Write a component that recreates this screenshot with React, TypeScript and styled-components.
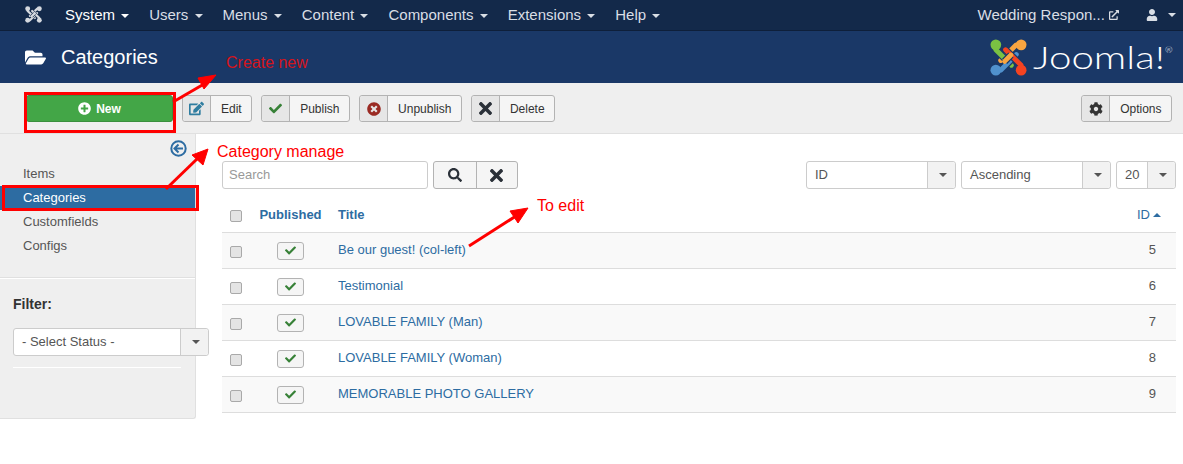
import React from "react";
import styled, { createGlobalStyle } from "styled-components";
import {
  FaCheck,
  FaCog,
  FaExternalLinkAlt,
  FaFolderOpen,
  FaPlusCircle,
  FaSearch,
  FaTimes,
  FaTimesCircle,
  FaUser,
  FaEdit,
} from "react-icons/fa";

const GlobalStyle = createGlobalStyle`
  html, body {
    margin: 0;
    padding: 0;
    background: #fff;
    font-family: "Liberation Sans", Arial, sans-serif;
    font-size: 13px;
    color: #333;
  }
`;

const menus = ["Users", "Menus", "Content", "Components", "Extensions", "Help"];

const rows = [
  { title: "Be our guest! (col-left)", id: 5 },
  { title: "Testimonial", id: 6 },
  { title: "LOVABLE FAMILY (Man)", id: 7 },
  { title: "LOVABLE FAMILY (Woman)", id: 8 },
  { title: "MEMORABLE PHOTO GALLERY", id: 9 },
];

// four interlocking arms of the Joomla mark, drawn so each one passes over the next
const arms = {
  orange: "M32 6 L27 6 L11 22",
  green: "M6 6 L6 11 L22 27",
  blue: "M6 32 L11 32 L27 16",
  red: "M32 32 L32 27 L16 11",
};

const JoomlaMark: React.FC<{ size: number; casing: string; mono?: string }> = ({ size, casing, mono }) => {
  const arm = (d: string, colour: string) => (
    <>
      <path d={d} stroke={casing} strokeWidth="7.4" strokeLinecap="butt" />
      <path d={d} stroke={mono || colour} strokeWidth="5" />
    </>
  );
  return (
    <svg width={size} height={size} viewBox="0 0 38 38" fill="none" strokeLinecap="round" strokeLinejoin="round">
      {arm(arms.orange, "#f9a541")}
      {arm(arms.green, "#7ac143")}
      {arm(arms.blue, "#5091cd")}
      {arm(arms.red, "#f44321")}
      {arm("M21.5 16.5 L15 23", "#f9a541")}
      <circle cx="6" cy="6" r="5.5" fill={mono || "#7ac143"} />
      <circle cx="32" cy="6" r="5.5" fill={mono || "#f9a541"} />
      <circle cx="6" cy="32" r="5.5" fill={mono || "#5091cd"} />
      <circle cx="32" cy="32" r="5.5" fill={mono || "#f44321"} />
    </svg>
  );
};

const ToggleIcon = () => (
  <svg width="17" height="17" viewBox="0 0 17 17" fill="none" stroke="#2d6ca2">
    <circle cx="8.5" cy="8.5" r="7.2" strokeWidth="2" />
    <path d="M8.5 4.5 L4.5 8.5 L8.5 12.5 M4.8 8.5 H13" strokeWidth="2" />
  </svg>
);

const ToolButton: React.FC<{ label: string; color: string; icon: React.ReactNode }> = ({ label, color, icon }) => (
  <ToolGroup>
    <ToolIcon $color={color}>{icon}</ToolIcon>
    <ToolLabel>{label}</ToolLabel>
  </ToolGroup>
);

const SelectBox: React.FC<{ width: number; value: string }> = ({ width, value }) => (
  <Select $width={width}>
    <SelectValue>{value}</SelectValue>
    <SelectArrow>
      <Caret />
    </SelectArrow>
  </Select>
);

export default function App() {
  return (
    <Page>
      <GlobalStyle />
      <NavBar>
        <NavLogo>
          <JoomlaMark size={17} casing="#13294a" mono="#d5d9df" />
        </NavLogo>
        <NavItem $active>
          System <Caret />
        </NavItem>
        {menus.map((m) => (
          <NavItem key={m}>
            {m} <Caret />
          </NavItem>
        ))}
        <NavSpacer />
        <NavSite>
          Wedding Respon... <FaExternalLinkAlt size={10} />
        </NavSite>
        <NavUser>
          <FaUser size={12} /> <Caret />
        </NavUser>
      </NavBar>

      <Header>
        <HeaderTitle>
          <FaFolderOpen size={21} />
          <h1>Categories</h1>
        </HeaderTitle>
        <Brand>
          <JoomlaMark size={37} casing="#1a3867" />
          <Wordmark>
            Joomla!<sup>®</sup>
          </Wordmark>
        </Brand>
      </Header>

      <Toolbar>
        <NewButton>
          <FaPlusCircle size={13} /> New
        </NewButton>
        <ToolButton label="Edit" color="#2f7da0" icon={<FaEdit size={15} />} />
        <ToolButton label="Publish" color="#378137" icon={<FaCheck size={13} />} />
        <ToolButton label="Unpublish" color="#9a2a23" icon={<FaTimesCircle size={14} />} />
        <ToolButton label="Delete" color="#2a3038" icon={<FaTimes size={19} />} />
        <NavSpacer />
        <ToolButton label="Options" color="#333" icon={<FaCog size={14} />} />
      </Toolbar>

      <Body>
        <Sidebar>
          <SideToggle>
            <ToggleIcon />
          </SideToggle>
          <SideNav>
            <SideLink>Items</SideLink>
            <SideLink $active>Categories</SideLink>
            <SideLink>Customfields</SideLink>
            <SideLink>Configs</SideLink>
          </SideNav>
          <SideRule />
          <FilterLabel>Filter:</FilterLabel>
          <FilterSelect>
            <SelectBox width={196} value="- Select Status -" />
          </FilterSelect>
          <FilterRule />
        </Sidebar>

        <Content>
          <ListBar>
            <SearchInput>Search</SearchInput>
            <SearchButtons>
              <SearchButton>
                <FaSearch size={14} />
              </SearchButton>
              <SearchButton>
                <FaTimes size={19} />
              </SearchButton>
            </SearchButtons>
            <NavSpacer />
            <SelectBox width={150} value="ID" />
            <SelectBox width={150} value="Ascending" />
            <SelectBox width={60} value="20" />
          </ListBar>

          <Table>
            <thead>
              <tr>
                <CheckHead>
                  <Checkbox />
                </CheckHead>
                <PublishedHead>Published</PublishedHead>
                <TitleHead>Title</TitleHead>
                <IdHead>
                  ID
                  <CaretUp />
                </IdHead>
              </tr>
            </thead>
            <tbody>
              {rows.map((r, i) => (
                <Row key={r.id} $odd={i % 2 === 0}>
                  <CheckCell>
                    <Checkbox />
                  </CheckCell>
                  <StatusCell>
                    <StatusButton>
                      <FaCheck size={11} />
                    </StatusButton>
                  </StatusCell>
                  <TitleCell>{r.title}</TitleCell>
                  <IdCell>{r.id}</IdCell>
                </Row>
              ))}
            </tbody>
          </Table>
        </Content>
      </Body>

      {/* screenshot annotations, on top of the page */}
      <RedBox $x={24} $y={92} $w={152} $h={41} />
      <RedBox $x={2} $y={185} $w={197} $h={26} />
      <Note $x={226} $y={54} $dim>
        Create new
      </Note>
      <Note $x={217} $y={143}>
        Category manage
      </Note>
      <Note $x={537} $y={197}>
        To edit
      </Note>
      <Arrows width="1183" height="464" viewBox="0 0 1183 464">
        <g stroke="#ff0000" strokeWidth="3" fill="#ff0000">
          <line x1="173" y1="102" x2="204" y2="84" />
          <path d="M216 75 L198 78 L204 89 Z" strokeWidth="1" />
          <line x1="166" y1="189" x2="198" y2="158" />
          <path d="M208 149 L192 155 L203 165 Z" strokeWidth="1" />
          <line x1="469" y1="246" x2="516" y2="216" />
          <path d="M528 208 L510 211 L518 223 Z" strokeWidth="1" />
        </g>
      </Arrows>
    </Page>
  );
}

const Page = styled.div`
  position: relative;
  width: 1183px;
  height: 464px;
  overflow: hidden;
`;

const NavBar = styled.div`
  display: flex;
  align-items: center;
  height: 29px;
  padding-bottom: 1px;
  background: #13294a;
  border-bottom: 1px solid #0e1f3a;
  font-size: 15px;
  color: #d9dee5;
`;

const NavLogo = styled.div`
  display: flex;
  width: 65px;
  padding: 0 0 1px 25px;
  box-sizing: border-box;
`;

const NavItem = styled.div<{ $active?: boolean }>`
  margin-right: 20px;
  white-space: nowrap;
  color: ${({ $active }) => ($active ? "#ffffff" : "#d9dee5")};
`;

const Caret = styled.span`
  display: inline-block;
  margin-left: 2px;
  vertical-align: middle;
  border-top: 4px solid currentColor;
  border-left: 4px solid transparent;
  border-right: 4px solid transparent;
`;

const CaretUp = styled.span`
  display: inline-block;
  margin-left: 3px;
  vertical-align: 2px;
  border-bottom: 4px solid currentColor;
  border-left: 4px solid transparent;
  border-right: 4px solid transparent;
`;

const NavSpacer = styled.div`
  flex: 1;
`;

const NavSite = styled.div`
  display: flex;
  align-items: center;
  white-space: pre;
`;

const NavUser = styled.div`
  display: flex;
  align-items: center;
  gap: 8px;
  margin-left: 27px;
  margin-right: 7px;
`;

const Header = styled.div`
  display: flex;
  align-items: center;
  justify-content: space-between;
  height: 52px;
  padding: 0 12px 0 25px;
  background: #1a3867;
  color: #fff;
`;

const HeaderTitle = styled.div`
  display: flex;
  align-items: center;
  gap: 15px;

  h1 {
    margin: 0;
    font-size: 20px;
    font-weight: 400;
    line-height: 24px;
  }
`;

const Brand = styled.div`
  display: flex;
  align-items: center;
  gap: 6px;
`;

const Wordmark = styled.div`
  width: 138px;
  font-family: "Lato", sans-serif;
  font-weight: 300;
  font-size: 31px;
  line-height: 37px;
  white-space: nowrap;
  color: #fff;
  transform: scaleX(1.3);
  transform-origin: left center;

  sup {
    font-size: 7px;
    vertical-align: 16px;
    line-height: 0;
  }
`;

const Toolbar = styled.div`
  display: flex;
  align-items: flex-start;
  gap: 9px;
  height: 51px;
  padding: 12px 11px 0 26px;
  box-sizing: border-box;
  background: #efefef;
  border-bottom: 1px solid #e0e0e0;
`;

const NewButton = styled.div`
  display: flex;
  align-items: center;
  justify-content: center;
  gap: 5px;
  width: 147px;
  height: 27px;
  border-radius: 3px;
  background: #43a647;
  border: 1px solid #3a8f3e;
  box-sizing: border-box;
  color: #fff;
  font-size: 12px;
  font-weight: 700;
`;

const ToolGroup = styled.div`
  display: flex;
  height: 27px;
  box-sizing: border-box;
  background: #f5f5f5;
  border: 1px solid #b3b3b3;
  border-radius: 3px;
  font-size: 12px;
`;

const ToolIcon = styled.div<{ $color: string }>`
  display: flex;
  align-items: center;
  justify-content: center;
  width: 28px;
  box-sizing: border-box;
  background: #e6e6e6;
  border-right: 1px solid #b3b3b3;
  border-radius: 3px 0 0 3px;
  color: ${({ $color }) => $color};
`;

const ToolLabel = styled.div`
  display: flex;
  align-items: center;
  padding: 0 9.5px 0 10px;
  color: #333;
`;

const Body = styled.div`
  display: flex;
  align-items: flex-start;
`;

const Sidebar = styled.div`
  position: relative;
  width: 196px;
  height: 285px;
  box-sizing: border-box;
  background: #efefef;
  border-right: 1px solid #e0e0e0;
  border-bottom: 1px solid #e0e0e0;
  border-radius: 0 0 3px 0;
`;

const SideToggle = styled.div`
  display: flex;
  justify-content: flex-end;
  height: 28px;
  padding: 6px 8px 0 0;
  box-sizing: border-box;
`;

const SideNav = styled.div`
  display: flex;
  flex-direction: column;
`;

const SideLink = styled.div<{ $active?: boolean }>`
  height: 24px;
  line-height: 24px;
  padding-left: 23px;
  font-size: 13px;
  background: ${({ $active }) => ($active ? "#2d6ca2" : "transparent")};
  color: ${({ $active }) => ($active ? "#fff" : "#555")};
`;

const SideRule = styled.div`
  margin-top: 19px;
  border-top: 1px solid #e0e0e0;
  border-bottom: 1px solid #fff;
`;

const FilterLabel = styled.div`
  margin: 17px 0 0 13px;
  height: 32px;
  font-size: 14px;
  font-weight: 700;
  line-height: 17px;
  color: #333;
`;

const FilterSelect = styled.div`
  padding-left: 13px;
`;

const FilterRule = styled.div`
  width: 168px;
  margin: 11px 0 0 13px;
  border-top: 1px solid #fff;
`;

const Select = styled.div<{ $width: number }>`
  position: relative;
  z-index: 1;
  display: flex;
  align-items: center;
  justify-content: space-between;
  width: ${({ $width }) => $width}px;
  height: 28px;
  box-sizing: border-box;
  padding-left: 8px;
  background: #fff;
  border: 1px solid #ccc;
  border-radius: 3px;
  font-size: 13px;
  color: #555;
`;

const SelectValue = styled.span`
  margin-bottom: 2px;
`;

const SelectArrow = styled.div`
  display: flex;
  align-items: center;
  justify-content: center;
  width: 28px;
  height: 100%;
  box-sizing: border-box;
  background: #f2f2f2;
  border-left: 1px solid #ccc;
  border-radius: 0 3px 3px 0;
  color: #555;
`;

const Content = styled.div`
  width: 954px;
  margin-left: 26px;
  padding-top: 27px;
`;

const ListBar = styled.div`
  display: flex;
  gap: 5px;
  margin-bottom: 7px;
`;

const SearchInput = styled.div`
  display: flex;
  align-items: center;
  width: 206px;
  height: 28px;
  box-sizing: border-box;
  padding: 0 0 2px 6px;
  border: 1px solid #ccc;
  border-radius: 3px;
  color: #999;
  font-size: 13px;
`;

const SearchButtons = styled.div`
  display: flex;
  height: 28px;
  box-sizing: border-box;
  background: #f5f5f5;
  border: 1px solid #b3b3b3;
  border-radius: 3px;
`;

const SearchButton = styled.div`
  display: flex;
  align-items: center;
  justify-content: center;
  width: 41.5px;
  box-sizing: border-box;
  color: #2a3038;

  & + & {
    border-left: 1px solid #b3b3b3;
  }
`;

const Table = styled.table`
  width: 100%;
  border-collapse: collapse;
  font-size: 13px;
`;

const CheckHead = styled.th`
  width: 28px;
  height: 36px;
  padding: 3px 0 0;
  box-sizing: border-box;
  text-align: center;
  vertical-align: middle;
  border-bottom: 1px solid #ddd;
`;

const PublishedHead = styled.th`
  width: 81px;
  padding: 2px 0 0;
  text-align: center;
  color: #2d6ca2;
  font-weight: 700;
  border-bottom: 1px solid #ddd;
`;

const TitleHead = styled.th`
  padding: 2px 0 0 7px;
  text-align: left;
  color: #2d6ca2;
  font-weight: 700;
  border-bottom: 1px solid #ddd;
`;

const IdHead = styled.th`
  width: 60px;
  padding: 2px 15px 0 0;
  text-align: right;
  color: #2d6ca2;
  font-weight: 400;
  border-bottom: 1px solid #ddd;
`;

const Row = styled.tr<{ $odd: boolean }>`
  height: 36px;
  background: ${({ $odd }) => ($odd ? "#f9f9f9" : "#fff")};
  border-bottom: 1px solid #ddd;
`;

const CheckCell = styled.td`
  padding: 1px 0 0;
  text-align: center;
  vertical-align: middle;
`;

const StatusCell = styled.td`
  padding: 1px 0 0;
  text-align: center;
  vertical-align: middle;
`;

const TitleCell = styled.td`
  padding: 0 0 1px 7px;
  color: #2d6ca2;
`;

const IdCell = styled.td`
  padding: 0 20px 1px 0;
  text-align: right;
  color: #555;
`;

const Checkbox = styled.span`
  display: inline-block;
  width: 12px;
  height: 12px;
  box-sizing: border-box;
  vertical-align: middle;
  background: #e4e4e4;
  border: 1px solid #a9a9a9;
  border-radius: 2px;
`;

const StatusButton = styled.span`
  display: inline-flex;
  align-items: center;
  justify-content: center;
  width: 27px;
  height: 18px;
  box-sizing: border-box;
  vertical-align: middle;
  background: #f5f5f5;
  border: 1px solid #b3b3b3;
  border-radius: 3px;
  color: #378137;
`;

const RedBox = styled.div<{ $x: number; $y: number; $w: number; $h: number }>`
  position: absolute;
  z-index: 3;
  left: ${({ $x }) => $x}px;
  top: ${({ $y }) => $y}px;
  width: ${({ $w }) => $w}px;
  height: ${({ $h }) => $h}px;
  box-sizing: border-box;
  border: 3px solid #f00;
`;

const Note = styled.div<{ $x: number; $y: number; $dim?: boolean }>`
  position: absolute;
  z-index: 3;
  left: ${({ $x }) => $x}px;
  top: ${({ $y }) => $y}px;
  font-size: 16px;
  line-height: 18px;
  white-space: nowrap;
  color: ${({ $dim }) => ($dim ? "#d5141c" : "#f00")};
`;

const Arrows = styled.svg`
  position: absolute;
  z-index: 4;
  left: 0;
  top: 0;
  pointer-events: none;
`;
